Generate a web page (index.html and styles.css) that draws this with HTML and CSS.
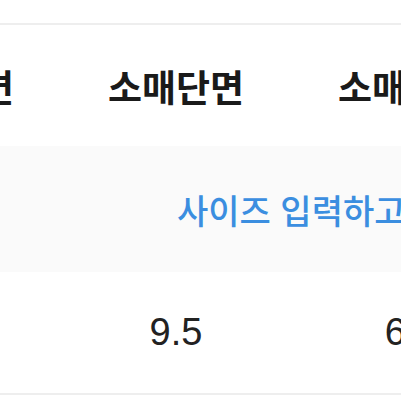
FILE: index.html
```html
<!DOCTYPE html>
<html lang="ko">
<head>
<meta charset="utf-8">
<link rel="stylesheet" href="styles.css">
</head>
<body>
<div class="page">
  <div class="table">
    <div class="row head">
      <div class="cell">소매단면</div>
      <div class="cell">소매단면</div>
      <div class="cell">소매단면</div>
    </div>
    <div class="band">
      <span class="hint">사이즈 입력하고 내 사이즈 확인하기</span>
    </div>
    <div class="row values">
      <div class="cell">9.5</div>
      <div class="cell">9.5</div>
      <div class="cell">60</div>
    </div>
  </div>
</div>
</body>
</html>
```
FILE: styles.css
```css
html, body {
  margin: 0;
  padding: 0;
  background: #ffffff;
}
.page {
  width: 401px;
  height: 401px;
  overflow: hidden;
  padding-top: 23px;
  box-sizing: border-box;
}
.table {
  border-top: 2px solid #eeeeee;
  border-bottom: 2px solid #eeeeee;
}
.row {
  display: grid;
  grid-template-columns: 230px 230px 230px;
  margin-left: -169px;
  width: 690px;
  align-items: center;
}
.cell {
  text-align: center;
  white-space: nowrap;
}
.head {
  height: 121px;
  font-family: "Liberation Sans", "Noto Sans CJK KR", sans-serif;
  font-weight: 700;
  font-size: 37px;
  color: #1a1a1a;
}
.band {
  height: 126px;
  background: #fafafa;
  display: flex;
  align-items: center;
  padding-left: 177px;
  white-space: nowrap;
  overflow: hidden;
}
.hint {
  font-family: "Noto Sans CJK KR", sans-serif;
  font-weight: 500;
  font-size: 34px;
  color: #3b8ee0;
}
.values {
  height: 121px;
  font-family: "Liberation Sans", "Noto Sans CJK KR", sans-serif;
  font-size: 38px;
  color: #222222;
}
```
